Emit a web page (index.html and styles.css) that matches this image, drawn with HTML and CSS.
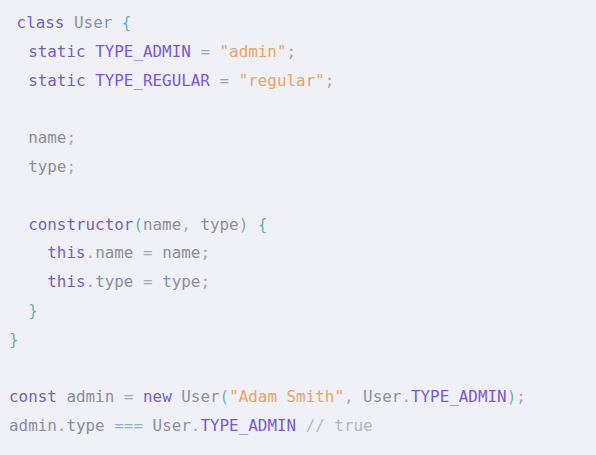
FILE: index.html
```html
<!DOCTYPE html>
<html>
<head>
<meta charset="utf-8">
<link rel="stylesheet" href="styles.css">
</head>
<body>
<pre class="code"><code><span class="lead"> </span><span class="kw">class</span> <span class="cls">User</span> <span class="p">{</span>
  <span class="kw">static</span> <span class="const">TYPE_ADMIN</span> <span class="op">=</span> <span class="str">"admin"</span><span class="op">;</span>
  <span class="kw">static</span> <span class="const">TYPE_REGULAR</span> <span class="op">=</span> <span class="str">"regular"</span><span class="op">;</span>

  <span class="id">name</span><span class="op">;</span>
  <span class="id">type</span><span class="op">;</span>

  <span class="kw">constructor</span><span class="p">(</span><span class="id">name</span><span class="op">,</span> <span class="id">type</span><span class="p">)</span> <span class="p">{</span>
    <span class="kw">this</span><span class="op">.</span><span class="id">name</span> <span class="op">=</span> <span class="id">name</span><span class="op">;</span>
    <span class="kw">this</span><span class="op">.</span><span class="id">type</span> <span class="op">=</span> <span class="id">type</span><span class="op">;</span>
  <span class="p">}</span>
<span class="p">}</span>

<span class="kw">const</span> <span class="id">admin</span> <span class="op">=</span> <span class="kw">new</span> <span class="cls">User</span><span class="p">(</span><span class="str">"Adam Smith"</span><span class="op">,</span> <span class="cls">User</span><span class="op">.</span><span class="const">TYPE_ADMIN</span><span class="p">)</span><span class="op">;</span>
<span class="id">admin</span><span class="op">.</span><span class="id">type</span> <span class="op2">===</span> <span class="cls">User</span><span class="op">.</span><span class="const">TYPE_ADMIN</span> <span class="cm">// true</span></code></pre>
</body>
</html>
```
FILE: styles.css
```css
html, body {
  margin: 0;
  padding: 0;
  background: #eff0f5;
}
.code {
  margin: 0;
  padding: 9px 9px;
  font-family: "DejaVu Sans Mono", "Liberation Mono", monospace;
  font-size: 15.9px;
  line-height: 28.8px;
  color: #8a8f99;
  background: #eff0f5;
}
.lead { letter-spacing: -2px; }
.kw { color: #7462b8; }
.cls { color: #8a90a6; }
.const { color: #7a58cf; }
.str { color: #e8a465; }
.p { color: #6db0b6; }
.op { color: #a3a8b0; }
.op2 { color: #8cb6c4; }
.id { color: #8a8f99; }
.cm { color: #b3b7bf; }
```
